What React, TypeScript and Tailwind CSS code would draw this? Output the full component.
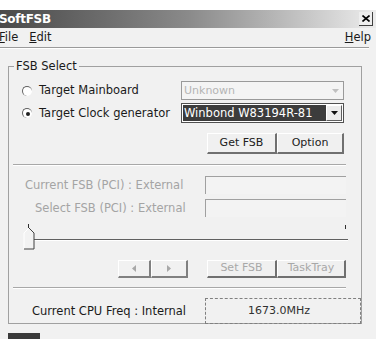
import { ReactNode } from 'react';

const FONT = { fontFamily: '"DejaVu Sans", Verdana, sans-serif' };

function Btn({ children, w, dim }: { children: ReactNode; w: string; dim?: boolean }) {
  return (
    <div
      className={`${w} h-full flex items-center justify-center border-t border-l border-t-white border-l-white border-r-2 border-b-2 border-r-[#707070] border-b-[#707070] bg-[#f0f0f0] text-[11px] ${dim ? 'text-[#a8a8a8]' : 'text-[#202020]'}`}
    >
      {children}
    </div>
  );
}

function Radio({ checked }: { checked?: boolean }) {
  return (
    <div className="w-[10px] h-[10px] rounded-full border-t border-l border-[#606060] border-r-white border-b-white bg-white flex items-center justify-center">
      {checked && <div className="w-[4px] h-[4px] rounded-full bg-[#202020]" />}
    </div>
  );
}

function Arrow() {
  return (
    <div className="w-[16px] h-full flex items-center justify-center border-l border-t border-l-white border-t-white border-r border-b border-r-[#606060] border-b-[#606060] bg-[#ececec]">
      <svg width="7" height="4" viewBox="0 0 7 4">
        <path d="M0 0h7L3.5 4z" fill="#101010" />
      </svg>
    </div>
  );
}

export default function App() {
  return (
    <div className="w-[376px] h-[339px] bg-[#f1f1f1] overflow-hidden flex flex-col" style={FONT}>
      <div className="h-[10px] bg-white" />

      {/* title bar */}
      <div className="h-[19px] flex items-center justify-between bg-gradient-to-r from-[#4a4a4a] via-[#8a8a8a] to-[#ececec]">
        <span className="-ml-[1px] text-white font-bold text-[12px] tracking-tight">SoftFSB</span>
        <div className="mr-[3px] w-[14px] h-[14px] flex items-center justify-center bg-[#eeeeee] border-r border-b border-[#404040] border-t-white border-l-white">
          <svg width="8" height="7" viewBox="0 0 8 7">
            <path d="M0.5 0.5l7 6M7.5 0.5l-7 6" stroke="#000" strokeWidth="1.6" />
          </svg>
        </div>
      </div>

      {/* menu */}
      <div className="h-[20px] flex items-center justify-between text-[11.5px] text-[#1a1a1a]">
        <div className="flex gap-[11px] -ml-[1px]">
          <span><u>F</u>ile</span>
          <span><u>E</u>dit</span>
        </div>
        <span className="mr-[5px]"><u>H</u>elp</span>
      </div>
      <div className="mr-[7px] h-[2px] border-t border-[#9a9a9a] border-b-white border-b" />

      <div className="pl-[8px] pt-[11px]">
        <fieldset className="relative w-[354px] h-[264px] border border-[#a0a0a0] text-[11px] text-[#1a1a1a]">
          <legend className="ml-[5px] px-[2px] text-[11.5px] leading-[13px]">FSB Select</legend>

          <div className="flex flex-col pl-[13px] pr-[17px] pt-[8px]">
            <div className="h-[19px] flex items-center">
              <Radio />
              <span className="ml-[7px] w-[133px] text-[11.5px] whitespace-nowrap">Target Mainboard</span>
              <div className="ml-[9px] flex-1 h-full flex border border-[#9a9a9a] bg-[#f4f4f4]">
                <span className="flex-1 pl-[2px] text-[#b4b4b4] leading-[17px]">Unknown</span>
                <div className="w-[16px] flex items-center justify-center">
                  <svg width="7" height="4" viewBox="0 0 7 4"><path d="M0 0h7L3.5 4z" fill="#c0c0c0" /></svg>
                </div>
              </div>
            </div>
            <div className="h-[20px] mt-[3px] flex items-center">
              <Radio checked />
              <span className="ml-[7px] w-[133px] text-[11.5px] whitespace-nowrap">Target Clock generator</span>
              <div className="ml-[9px] flex-1 h-full flex border border-[#505050] bg-white p-[1px]">
                <span className="flex-1 pl-[1px] bg-[#3c3c3c] text-white leading-[16px] text-[11.5px] whitespace-nowrap overflow-hidden">Winbond W83194R-81</span>
                <Arrow />
              </div>
            </div>

            <div className="h-[21px] mt-[10px] flex justify-end">
              <Btn w="w-[70px]">Get FSB</Btn>
              <Btn w="w-[67px]">Option</Btn>
            </div>
          </div>

          <div className="ml-[4px] mr-[15px] mt-[10px] h-[2px] border-t border-[#a8a8a8] border-b border-b-white" />

          <div className="flex flex-col pr-[15px] pt-[10px] text-[#a4a4a4] text-[11.5px]">
            <div className="h-[18px] flex items-center">
              <span className="w-[188px] pl-[16px] whitespace-nowrap">Current FSB (PCI) : External</span>
              <div className="ml-[8px] flex-1 h-full border-t border-l border-[#a0a0a0] border-r-white border-b-white bg-[#f3f3f3]" />
            </div>
            <div className="h-[18px] mt-[5px] flex items-center">
              <span className="w-[188px] pl-[26px] whitespace-nowrap">Select FSB (PCI) : External</span>
              <div className="ml-[8px] flex-1 h-full border-t border-l border-[#a0a0a0] border-r-white border-b-white bg-[#f3f3f3]" />
            </div>
          </div>

          {/* slider */}
          <div className="relative ml-[14px] mr-[13px] mt-[7px] h-[26px]">
            <div className="absolute left-[5px] top-0 w-px h-[4px] bg-[#303030]" />
            <div className="absolute right-[2px] top-[1px] w-px h-[4px] bg-[#303030]" />
            <div className="absolute left-[10px] right-0 top-[15px] h-[2px] border-t border-[#606060] border-b border-b-white" />
            <svg className="absolute left-0 top-[4px]" width="12" height="22" viewBox="0 0 12 22">
              <path d="M1 21V5L6 0l5 5v16z" fill="#f2f2f2" />
              <path d="M1 21V5L6 0" stroke="#fff" fill="none" />
              <path d="M6 0l5 5v16H1" stroke="#404040" fill="none" />
            </svg>
          </div>

          <div className="h-[18px] mt-[10px] pr-[15px] flex items-center">
            <div className="ml-[109px] h-full flex">
              <div className="w-[33px] h-full flex items-center justify-center border-r-2 border-b-2 border-[#808080] border-t border-l border-t-white border-l-white">
                <svg width="4" height="7" viewBox="0 0 4 7"><path d="M4 0v7L0 3.5z" fill="#a8a8a8" /></svg>
              </div>
              <div className="w-[37px] h-full flex items-center justify-center border-r-2 border-b-2 border-[#808080] border-t border-l border-t-white border-l-white">
                <svg width="4" height="7" viewBox="0 0 4 7"><path d="M0 0v7L4 3.5z" fill="#a8a8a8" /></svg>
              </div>
            </div>
            <div className="ml-auto h-full flex">
              <Btn w="w-[70px]" dim>Set FSB</Btn>
              <Btn w="w-[69px]" dim>TaskTray</Btn>
            </div>
          </div>

          <div className="ml-[4px] mr-[15px] mt-[9px] h-[2px] border-t border-[#a8a8a8] border-b border-b-white" />

          <div className="h-[26px] mt-[9px] flex items-center">
            <span className="w-[196px] pl-[23px] text-[11.5px] whitespace-nowrap">Current CPU Freq : Internal</span>
            <div className="flex-1 h-full border border-dashed border-[#808080] flex items-center pl-[42px] text-[11px] text-[#303030]">
              1673.0MHz
            </div>
          </div>
        </fieldset>
      </div>

      <div className="ml-[8px] mt-[9px] w-[32px] h-[6px] bg-[#3a3a3a]" />
    </div>
  );
}
